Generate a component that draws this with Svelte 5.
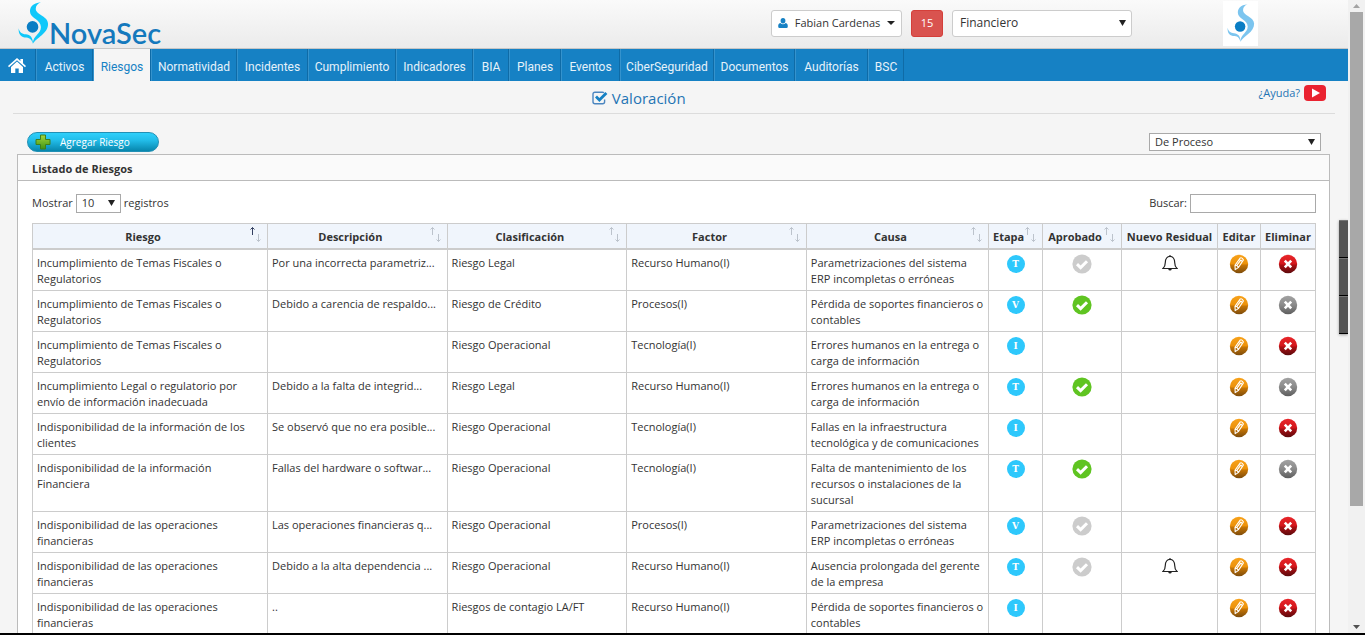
<script>
	const menu = ["Activos", "Riesgos", "Normatividad", "Incidentes", "Cumplimiento", "Indicadores", "BIA", "Planes", "Eventos", "CiberSeguridad", "Documentos", "Auditorías", "BSC"];
	let active = "Riesgos";

	const columns = [
		{ name: "Riesgo", cls: "riesgo", sort: true },
		{ name: "Descripción", cls: "medium", sort: true },
		{ name: "Clasificación", cls: "medium", sort: true },
		{ name: "Factor", cls: "medium", sort: true },
		{ name: "Causa", cls: "causa", sort: true },
		{ name: "Etapa", cls: "etapa", sort: true },
		{ name: "Aprobado", cls: "aprobado", sort: true },
		{ name: "Nuevo Residual", cls: "residual" },
		{ name: "Editar", cls: "editar" },
		{ name: "Eliminar", cls: "eliminar" },
	];
	let sorted = "Riesgo";

	// approved: "" = no mark, "no" = grey mark, "yes" = green mark
	let risks = [
		{ name: "Incumplimiento de Temas Fiscales o Regulatorios", desc: "Por una incorrecta parametriz...", type: "Riesgo Legal", factor: "Recurso Humano(I)", cause: "Parametrizaciones del sistema ERP incompletas o erróneas", stage: "T", approved: "no", bell: true },
		{ name: "Incumplimiento de Temas Fiscales o Regulatorios", desc: "Debido a carencia de respaldo...", type: "Riesgo de Crédito", factor: "Procesos(I)", cause: "Pérdida de soportes financieros o contables", stage: "V", approved: "yes" },
		{ name: "Incumplimiento de Temas Fiscales o Regulatorios", desc: "", type: "Riesgo Operacional", factor: "Tecnología(I)", cause: "Errores humanos en la entrega o carga de información", stage: "I", approved: "" },
		{ name: "Incumplimiento Legal o regulatorio por envío de información inadecuada", desc: "Debido a la falta de integrid...", type: "Riesgo Legal", factor: "Recurso Humano(I)", cause: "Errores humanos en la entrega o carga de información", stage: "T", approved: "yes" },
		{ name: "Indisponibilidad de la información de los clientes", desc: "Se observó que no era posible...", type: "Riesgo Operacional", factor: "Tecnología(I)", cause: "Fallas en la infraestructura tecnológica y de comunicaciones", stage: "I", approved: "" },
		{ name: "Indisponibilidad de la información Financiera", desc: "Fallas del hardware o softwar...", type: "Riesgo Operacional", factor: "Tecnología(I)", cause: "Falta de mantenimiento de los recursos o instalaciones de la sucursal", stage: "T", approved: "yes" },
		{ name: "Indisponibilidad de las operaciones financieras", desc: "Las operaciones financieras q...", type: "Riesgo Operacional", factor: "Procesos(I)", cause: "Parametrizaciones del sistema ERP incompletas o erróneas", stage: "V", approved: "no" },
		{ name: "Indisponibilidad de las operaciones financieras", desc: "Debido a la alta dependencia ...", type: "Riesgo Operacional", factor: "Recurso Humano(I)", cause: "Ausencia prolongada del gerente de la empresa", stage: "T", approved: "no", bell: true },
		{ name: "Indisponibilidad de las operaciones financieras", desc: "..", type: "Riesgos de contagio LA/FT", factor: "Recurso Humano(I)", cause: "Pérdida de soportes financieros o contables", stage: "I", approved: "" },
	];

	let search = "";
</script>

{#snippet mark()}
	<svg class="mark" viewBox="52 4 96 132" aria-hidden="true">
		<path d="M123 6C98 8 86 22 90 40C94 56 122 60 123 82C123 104 98 108 98 134C108 116 146 102 145 72C144 48 106 44 107 26C107 16 114 9 123 6Z" />
		<path d="M54 86C53 106 62 114 78 115C90 116 95 124 98 134C99 116 90 106 76 105C64 104 56 98 54 86Z" />
		<circle cx="97" cy="82" r="18" />
	</svg>
{/snippet}

{#snippet arrow()}
	<svg class="arrow" viewBox="0 0 8 8" aria-hidden="true"><path d="M0 1H7L3.5 7Z" /></svg>
{/snippet}

<div class="screen">
	<div class="view">
		<div class="page">
			<header>
				<a class="logo" href="#inicio">{@render mark()}<span>NovaSec</span></a>
				<div class="account">
					<button class="user">
						<svg width="10" height="10" viewBox="0 0 10 10"><ellipse cx="5" cy="2.7" rx="2.4" ry="2.7" /><path d="M2.4 5C3.8 6.6 6.2 6.6 7.6 5C9.6 5.2 9.8 7 9.8 8.4Q9.8 10 8.4 10H1.6Q.2 10 .2 8.4C.2 7 .4 5.2 2.4 5Z" /></svg>
						Fabian Cardenas
						<svg class="caret" width="8" height="4" viewBox="0 0 8 4"><path d="M0 0H8L4 4Z" /></svg>
					</button>
					<button class="badge">15</button>
					<div class="select area">
						<select aria-label="Área"><option>Financiero</option></select>
						{@render arrow()}
					</div>
				</div>
				<div class="card">{@render mark()}</div>
			</header>

			<nav>
				<a href="#inicio" aria-label="Inicio">
					<svg width="18" height="15" viewBox="0 0 18 15"><path d="M9 0L12.4 3V1H15V5.3L18 8L17 9.2L9 2.2L1 9.2L0 8Z" /><path d="M9 3.6L15 8.9V15H10.7V10.4H7.3V15H3V8.9Z" /></svg>
				</a>
				{#each menu as item}
					<a href="#{item}" class:active={item === active}>{item}</a>
				{/each}
			</nav>

			<div class="heading">
				<h1>
					<svg width="16" height="14" viewBox="0 0 16 14"><path d="M12 1.7Q11.4 1.2 10.4 1.2H3Q1 1.2 1 3.2V10.8Q1 12.8 3 12.8H10.6Q12.6 12.8 12.6 10.8V8.6" fill="none" stroke="#4c86c0" stroke-width="1.4" /><path d="M3 6.4L5 4.5L7.4 6.9L13.4 1L15.4 3L7.4 10.9Z" fill="#1681c4" /></svg>
					Valoración
				</h1>
				<a href="#ayuda">
					¿Ayuda?
					<svg width="22" height="16" viewBox="0 0 22 16"><rect width="22" height="16" rx="4" fill="#ea2330" /><path d="M8 3.5L16 8L8 12.5Z" fill="#fff" /></svg>
				</a>
			</div>

			<div class="actions">
				<button class="add">
					<svg width="16" height="16" viewBox="0 0 16 16">
						<defs>
							<linearGradient id="plus" x2="0" y2="1"><stop offset="0" stop-color="#a4d63c" /><stop offset="1" stop-color="#3f9414" /></linearGradient>
						</defs>
						<path d="M5.5 1H10.5V5.5H15V10.5H10.5V15H5.5V10.5H1V5.5H5.5Z" fill="url(#plus)" stroke="#3c7f1c" stroke-linejoin="round" />
					</svg>
					Agregar Riesgo
				</button>
				<div class="select scope">
					<select aria-label="Tipo de riesgo"><option>De Proceso</option></select>
					{@render arrow()}
				</div>
			</div>

			<main>
				<h2>Listado de Riesgos</h2>
				<div class="body">
					<div class="filters">
						<label>
							Mostrar
							<span class="select length">
								<select><option>10</option></select>
								{@render arrow()}
							</span>
							registros
						</label>
						<label>Buscar: <input type="text" bind:value={search} /></label>
					</div>

					<table>
						<thead>
							<tr>
								{#each columns as col}
									<th class={col.cls} class:sort={col.sort} class:sorted={col.name === sorted}>
										{col.name}
										{#if col.sort}
											<svg width="12" height="17" viewBox="0 0 12 17"><path class="up" d="M3.5 9V1.5M1.5 3.5L3.5 1.5L5.5 3.5" /><path d="M9.5 8V15.5M7.5 13.5L9.5 15.5L11.5 13.5" /></svg>
										{/if}
									</th>
								{/each}
							</tr>
						</thead>
						<tbody>
							{#each risks as risk, i}
								<tr>
									<td>{risk.name}</td>
									<td>{risk.desc}</td>
									<td>{risk.type}</td>
									<td>{risk.factor}</td>
									<td>{risk.cause}</td>
									<td class="icon"><span class="stage">{risk.stage}</span></td>
									<td class="icon">
										{#if risk.approved}
											<svg class="check" class:yes={risk.approved === "yes"} width="20" height="20" viewBox="0 0 20 20"><circle cx="10" cy="10" r="9.6" /><path d="M5 10.2L8.6 13.6L15 7.2" /></svg>
										{/if}
									</td>
									<td class="icon">
										{#if risk.bell}
											<svg class="bell" width="16" height="18" viewBox="0 0 16 18"><path d="M8 2.4V1M1 14.5C2.6 13.2 3.3 11.6 3.3 8.6C3.3 4.6 5.2 2.4 8 2.4S12.7 4.6 12.7 8.6C12.7 11.6 13.4 13.2 15 14.5Z" /><path class="clapper" d="M6.2 15H9.8Q9.5 16.6 8 16.6T6.2 15Z" /></svg>
										{/if}
									</td>
									<td class="icon">
										<button aria-label="Editar">
											<svg width="20" height="20" viewBox="0 0 20 20">
												<defs>
													<linearGradient id="edit{i}" x2="0" y2="1"><stop offset="0" stop-color="#f8a21a" /><stop offset=".5" stop-color="#ec920a" /><stop offset=".55" stop-color="#c87604" /><stop offset="1" stop-color="#7d4c0c" /></linearGradient>
												</defs>
												<circle cx="10" cy="10" r="9.2" fill="url(#edit{i})" />
												<path d="M6.2 15.6L6 11.3L11.3 3.9Q13.4 3.2 14.4 6L9.3 13.6Z M6 11.3Q8.7 11 9.3 13.6M10.2 5.5Q12.6 5.7 13.3 7.7M8 11.2L11.6 6.4" fill="none" stroke="#fff" stroke-width="1.1" stroke-linejoin="round" />
											</svg>
										</button>
									</td>
									<td class="icon">
										<!-- approved risks can't be deleted -->
										<button aria-label="Eliminar" disabled={risk.approved === "yes"}>
											<svg width="20" height="20" viewBox="0 0 20 20">
												<defs>
													<linearGradient id="del{i}" x2="0" y2="1">
														{#if risk.approved === "yes"}
															<stop offset="0" stop-color="#a2a2a2" /><stop offset=".5" stop-color="#8a8a8a" /><stop offset="1" stop-color="#5e5e5e" />
														{:else}
															<stop offset="0" stop-color="#e8262a" /><stop offset=".5" stop-color="#d3161b" /><stop offset=".55" stop-color="#ac1014" /><stop offset="1" stop-color="#5e0b0d" />
														{/if}
													</linearGradient>
												</defs>
												<circle cx="10" cy="10" r="9.2" fill="url(#del{i})" />
												<path d="M6.8 6.6L13.2 13.4M13.2 6.6L6.8 13.4" stroke="#fff" stroke-width="2.6" />
											</svg>
										</button>
									</td>
								</tr>
							{/each}
						</tbody>
					</table>
				</div>
			</main>

			<div class="dock"><i></i><i></i><i></i></div>
		</div>
		<div class="scrollbar">
			<svg width="7" height="4" viewBox="0 0 7 4"><path d="M0 4H7L3.5 0Z" fill="#a3a3a3" /></svg>
			<div class="thumb"></div>
			<svg width="7" height="4" viewBox="0 0 7 4"><path d="M0 0H7L3.5 4Z" fill="#505050" /></svg>
		</div>
	</div>
	<div class="taskbar"></div>
</div>

<style>
	:global(body) {
		margin: 0;
		background: #f5f5f5;
	}
	.screen {
		height: 100vh;
		display: flex;
		flex-direction: column;
		font-family: "Open Sans", "Noto Sans", sans-serif;
		font-size: 11px;
		line-height: 16px;
		color: #333;
	}
	.view {
		flex: 1;
		min-height: 0;
		display: flex;
	}
	.page {
		flex: 1;
		min-width: 0;
		overflow: hidden;
		position: relative;
	}
	.taskbar {
		height: 2px;
		background: #000;
	}
	svg {
		flex: none;
	}
	a {
		text-decoration: none;
	}
	button,
	select,
	input {
		font: inherit;
		color: inherit;
		box-sizing: border-box;
		margin: 0;
	}

	header {
		display: flex;
		align-items: center;
		height: 46px;
		padding: 0 90px 2px 18px;
		background: linear-gradient(#fafafa, #ebebeb);
		border-bottom: 1px solid #c6c6c6;
	}
	.mark {
		width: 31px;
		height: 44px;
		fill: #10c8fa;
	}
	.mark circle {
		fill: #0a7dc4;
	}
	.logo {
		display: flex;
		align-items: flex-end;
	}
	.logo span {
		font: 600 29px/32px Lato, sans-serif;
		color: #1479bd;
		margin-bottom: -4px;
	}
	.account {
		display: flex;
		gap: 9px;
		margin-left: auto;
	}
	.user,
	.badge {
		display: flex;
		align-items: center;
		justify-content: center;
		height: 27px;
		padding: 0;
		border: 1px solid #ccc;
		border-radius: 3px;
		background: #fff;
	}
	.user {
		width: 131px;
		gap: 7px;
		fill: #1681c4;
	}
	.caret {
		fill: #222;
	}
	.badge {
		width: 32px;
		background: #d9534f;
		border-color: #d43f3a;
		color: #fff;
	}
	.card {
		display: flex;
		justify-content: center;
		align-items: center;
		width: 35px;
		height: 45px;
		margin-left: 91px;
		background: #fff;
	}
	.card .mark {
		width: 28px;
		height: 40px;
		fill: #7cc5ef;
	}

	.select {
		display: inline-grid;
		align-items: center;
	}
	.select select,
	.select .arrow {
		grid-area: 1 / 1;
	}
	.select select {
		appearance: none;
		width: 100%;
		height: 100%;
		padding: 0 5px;
		border: 1px solid #a9a9a9;
		border-radius: 0;
		background: #fff;
	}
	.arrow {
		width: 8px;
		height: 8px;
		justify-self: end;
		margin-right: 5px;
		fill: #222;
		pointer-events: none;
	}
	.area {
		width: 180px;
		height: 27px;
	}
	.area select {
		padding: 0 7px;
		border-color: #ccc;
		border-radius: 3px;
		font-size: 12px;
	}
	.scope {
		width: 172px;
		height: 18px;
	}
	.length {
		width: 45px;
		height: 19px;
	}

	nav {
		display: grid;
		grid-template-columns: 36px 57px 58px 86px 71px 88px 77px 36px 52px 59px 94px 81px 73px 36px;
		grid-template-rows: 32px;
		background: #1681c4;
		font: 12px/36px Roboto, sans-serif;
	}
	nav a {
		box-sizing: border-box;
		border-right: 1px solid #0f6ba6;
		border-left: 1px solid #3593cd;
		color: #e6f2fa;
		text-align: center;
		white-space: nowrap;
	}
	nav a:first-child {
		display: flex;
		align-items: center;
		padding-left: 8px;
		border-left: 0;
		fill: #fff;
	}
	nav a.active {
		background: #f5f5f5;
		color: #1681c4;
	}

	.heading {
		display: flex;
		align-items: center;
		height: 32px;
		margin: 0 13px;
		border-bottom: 1px solid #dcdcdc;
	}
	h1 {
		flex: 1;
		display: flex;
		align-items: center;
		justify-content: center;
		gap: 4px;
		margin: 0;
		padding: 2px 0 0 6px;
		font-size: 15px;
		font-weight: 400;
		color: #1f74b4;
	}
	.heading a {
		display: flex;
		align-items: center;
		gap: 4px;
		margin: 0 9px 8px 0;
		color: #1f74b4;
	}

	.actions {
		display: flex;
		justify-content: space-between;
		align-items: center;
		margin: 18px 27px 2px;
	}
	.add {
		display: flex;
		align-items: center;
		gap: 9px;
		width: 132px;
		height: 20px;
		padding: 0 7px;
		border: 1px solid #2290b5;
		border-radius: 10px;
		background: linear-gradient(#2fd0fb, #22bde9 40%, #0786ad);
		color: #fff;
		font-size: 10px;
		font-weight: 500;
	}

	main {
		margin: 0 18px 20px 17px;
		border: 1px solid #bbb;
		background: #fff;
	}
	h2 {
		height: 25px;
		margin: 0;
		padding-left: 14px;
		background: #fafafa;
		border-bottom: 1px solid #bbb;
		font-size: 11px;
		line-height: 27px;
		font-weight: 700;
	}
	.body {
		padding: 12px 13px 12px 14px;
	}
	.filters {
		display: flex;
		justify-content: space-between;
		height: 30px;
	}
	.filters label {
		display: flex;
		align-items: center;
		gap: 3px;
		height: 20px;
	}
	.filters input {
		width: 126px;
		height: 19px;
		padding: 1px 4px;
		border: 1px solid #a9a9a9;
	}

	table {
		width: 100%;
		table-layout: fixed;
		border-collapse: collapse;
	}
	th,
	td {
		border: 1px solid #ccc;
		padding: 5px 4px 3px;
	}
	th {
		box-sizing: border-box;
		position: relative;
		padding: 5px 4px 3px;
		border-bottom-width: 2px;
		background: #f0f5fc;
		font-size: 11px;
		font-weight: 700;
		white-space: nowrap;
	}
	th.sort {
		padding-right: 18px;
	}
	th svg {
		position: absolute;
		top: 2px;
		right: 6px;
		fill: none;
		stroke: #bcc3cc;
	}
	.sorted .up {
		stroke: #333f60;
	}
	.riesgo {
		width: 235px;
	}
	.medium {
		width: 14%;
	}
	.etapa {
		width: 54px;
	}
	.aprobado {
		width: 79px;
	}
	.residual {
		width: 96px;
	}
	.editar {
		width: 43px;
	}
	.eliminar {
		width: 55px;
	}
	td {
		vertical-align: top;
	}
	.icon {
		padding-top: 4px;
		text-align: center;
	}
	.icon svg,
	.stage {
		display: block;
		margin: 0 auto;
	}
	.icon button {
		display: block;
		width: 100%;
		padding: 0;
		border: 0;
		background: none;
	}
	.stage {
		width: 18px;
		height: 18px;
		margin-top: 1px;
		border-radius: 50%;
		background: #2ec8fc;
		color: #fff;
		font: bold 9px/18px "DejaVu Serif", serif;
	}
	.check {
		fill: #ccc;
	}
	.check.yes {
		fill: #5fc421;
	}
	.check path {
		fill: none;
		stroke: #fff;
		stroke-width: 3;
	}
	.bell {
		fill: none;
		stroke: #222;
		stroke-width: 1.2;
	}
	.clapper {
		fill: #222;
		stroke: none;
	}

	.dock {
		position: absolute;
		top: 220px;
		right: 0;
		width: 9px;
		box-shadow: 0 1px 3px #999;
	}
	.dock i {
		display: block;
		height: 36px;
		background: #555;
		border-top: 1px solid #777;
		border-bottom: 1px solid #000;
	}
	.scrollbar {
		display: flex;
		flex-direction: column;
		align-items: center;
		width: 17px;
		background: #f1f1f1;
	}
	.scrollbar svg {
		margin: 4px 0;
	}
	.thumb {
		width: 13px;
		height: 78%;
		margin-bottom: auto;
		background: #a8a8a8;
	}
</style>
